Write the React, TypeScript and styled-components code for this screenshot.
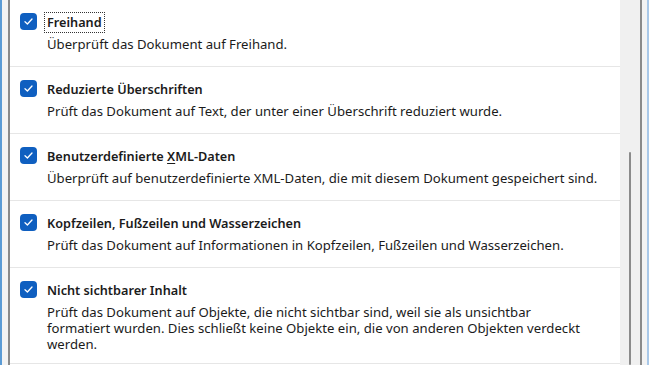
import styled, { createGlobalStyle } from "styled-components";
import { FC, ReactNode } from "react";

const GlobalStyle = createGlobalStyle`
  html, body {
    margin: 0;
    padding: 0;
    background: #f3f3f3;
    overflow: hidden;
  }
  body {
    font-family: "Noto Sans", "Open Sans", sans-serif;
    color: #1b1b1b;
  }
`;

const Frame = styled.div`
  width: 649px;
  height: 365px;
  display: flex;
  background: #f3f3f3;
  border-left: 2px solid #5b9bd5;
  border-right: 2px solid #a9c8e8;
  box-sizing: border-box;
  overflow: hidden;
`;

const ListBox = styled.div`
  flex: 1;
  margin-left: 6px;
  border-left: 2px solid #8a8a8a;
  border-right: 2px solid #8a8a8a;
  background: #ffffff;
  display: flex;
  min-width: 0;
`;

const List = styled.div`
  flex: 1;
  display: flex;
  flex-direction: column;
  min-width: 0;
`;

const ScrollTrack = styled.div`
  width: 20px;
  background: #f0f0f0;
  display: flex;
  flex-direction: column;
  align-items: center;
  padding-top: 152px;
`;

const ScrollThumb = styled.div`
  width: 2px;
  flex: 1;
  background: #8b8b8b;
  border-radius: 1px;
`;

const Gutter = styled.div`
  width: 5px;
  background: #f3f3f3;
`;

const Row = styled.div`
  height: 67px;
  flex-shrink: 0;
  box-sizing: border-box;
  border-bottom: 1px solid #e6e6e6;
  display: flex;
  align-items: flex-start;
  padding: 13px 14px 0 10px;
  gap: 10px;
  &:last-child {
    height: 96px;
  }
`;

const Check = styled.div`
  width: 17px;
  height: 17px;
  border-radius: 4px;
  background: #0f5fc0;
  display: flex;
  align-items: center;
  justify-content: center;
  flex-shrink: 0;
`;

const Texts = styled.div`
  flex: 1;
  min-width: 0;
  display: flex;
  flex-direction: column;
  gap: 4px;
`;

const Title = styled.span<{ focused?: boolean }>`
  align-self: flex-start;
  font-size: 12.7px;
  font-weight: 600;
  line-height: 17px;
  padding: 0 1px;
  margin-left: -2px;
  outline: ${(p) => (p.focused ? "1px dotted #333" : "none")};
  outline-offset: 0;
  border: 1px solid transparent;
`;

const Desc = styled.p`
  margin: 0;
  font-size: 13.15px;
  line-height: 16px;
  white-space: pre-line;
`;

const Key = styled.span`
  text-decoration: underline;
  text-underline-offset: 2px;
`;

const CheckMark = () => (
  <svg width="11" height="11" viewBox="0 0 11 11">
    <path d="M2 5.8 L4.4 8 L9 3" fill="none" stroke="#ffffff" strokeWidth="1.3" strokeLinecap="round" strokeLinejoin="round" />
  </svg>
);

interface IItem {
  title: ReactNode;
  desc: string;
  focused?: boolean;
}

const items: IItem[] = [
  { title: "Freihand", desc: "Überprüft das Dokument auf Freihand.", focused: true },
  { title: "Reduzierte Überschriften", desc: "Prüft das Dokument auf Text, der unter einer Überschrift reduziert wurde." },
  {
    title: (
      <>
        Benutzerdefinierte <Key>X</Key>ML-Daten
      </>
    ),
    desc: "Überprüft auf benutzerdefinierte XML-Daten, die mit diesem Dokument gespeichert sind.",
  },
  {
    title: "Kopfzeilen, Fußzeilen und Wasserzeichen",
    desc: "Prüft das Dokument auf Informationen in Kopfzeilen, Fußzeilen und Wasserzeichen.",
  },
  {
    title: "Nicht sichtbarer Inhalt",
    desc: "Prüft das Dokument auf Objekte, die nicht sichtbar sind, weil sie als unsichtbar\nformatiert wurden. Dies schließt keine Objekte ein, die von anderen Objekten verdeckt werden.",
  },
];

const Item: FC<IItem> = ({ title, desc, focused }) => (
  <Row>
    <Check>
      <CheckMark />
    </Check>
    <Texts>
      <Title focused={focused}>{title}</Title>
      <Desc>{desc}</Desc>
    </Texts>
  </Row>
);

export default function App() {
  return (
    <>
      <GlobalStyle />
      <Frame>
        <ListBox>
          <List>
            {items.map((it, i) => (
              <Item key={i} {...it} />
            ))}
          </List>
          <ScrollTrack>
            <ScrollThumb />
          </ScrollTrack>
        </ListBox>
        <Gutter />
      </Frame>
    </>
  );
}
